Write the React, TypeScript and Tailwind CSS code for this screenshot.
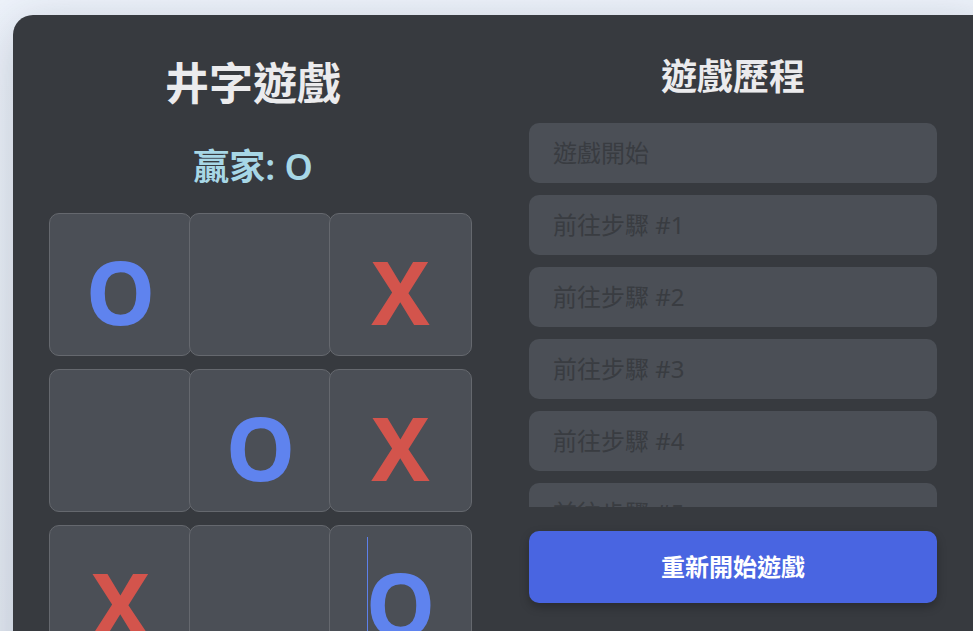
import React from "react";

type Mark = "X" | "O" | null;

const board: Mark[] = ["O", null, "X", null, "O", "X", "X", null, "O"];
const history = ["遊戲開始", "前往步驟 #1", "前往步驟 #2", "前往步驟 #3", "前往步驟 #4", "前往步驟 #5"];

const font = { fontFamily: '"Noto Sans", "Noto Sans CJK TC", sans-serif' };

function Cell({ mark, caret }: { mark: Mark; caret?: boolean }) {
  return (
    <button className="relative w-[143px] h-[143px] rounded-[10px] border border-[#65686e] bg-[#4b4f56] flex items-center justify-center pt-[12px]">
      {caret ? (
        <span className="absolute left-[37px] top-[11px] w-px h-[120px] bg-[#5d80ea]" />
      ) : null}
      {mark ? (
        <span
          className={`text-[88px] font-bold leading-none ${
            mark === "O" ? "text-[#5f83ee]" : "text-[#d3544c]"
          }`}
        >
          {mark}
        </span>
      ) : null}
    </button>
  );
}

export default function App() {
  return (
    <div
      className="min-h-screen bg-gradient-to-b from-[#eef3fb] to-[#e3e9f2] pt-[15px] pl-[13px] overflow-hidden"
      style={font}
    >
      <div className="w-[980px] rounded-[20px] bg-[#373a3f] shadow-[0_10px_50px_rgba(30,45,70,0.22)] pt-[36px] pl-[36px] pb-[36px] flex gap-[72px]">
        <div className="w-[408px] flex flex-col items-center">
          <h1 className="text-[44px] leading-[64px] font-bold text-[#ebebed]">井字遊戲</h1>
          <h2 className="mt-[26px] text-[36px] leading-[52px] font-semibold text-[#a7d7e6]">
            贏家: O
          </h2>
          <div className="mt-[20px] self-start grid grid-cols-[repeat(3,140px)] gap-y-[13px]">
            {board.map((m, i) => (
              <Cell key={i} mark={m} caret={i === 8} />
            ))}
          </div>
        </div>

        <div className="w-[408px] flex flex-col">
          <h2 className="text-center text-[36px] leading-[52px] font-bold text-[#ebebed]">
            遊戲歷程
          </h2>
          <div className="mt-[20px] h-[384px] overflow-hidden flex flex-col gap-[12px]">
            {history.map((h) => (
              <div
                key={h}
                className="shrink-0 h-[60px] rounded-[10px] bg-[#4b4f56] px-[24px] flex items-center text-[24px] text-[#393c41]"
              >
                {h}
              </div>
            ))}
          </div>
          <button className="mt-[24px] h-[72px] rounded-[10px] bg-[#4965e1] text-white text-[24px] font-bold shadow-[0_4px_10px_rgba(0,0,0,0.25)]">
            重新開始遊戲
          </button>
        </div>
      </div>
    </div>
  );
}
